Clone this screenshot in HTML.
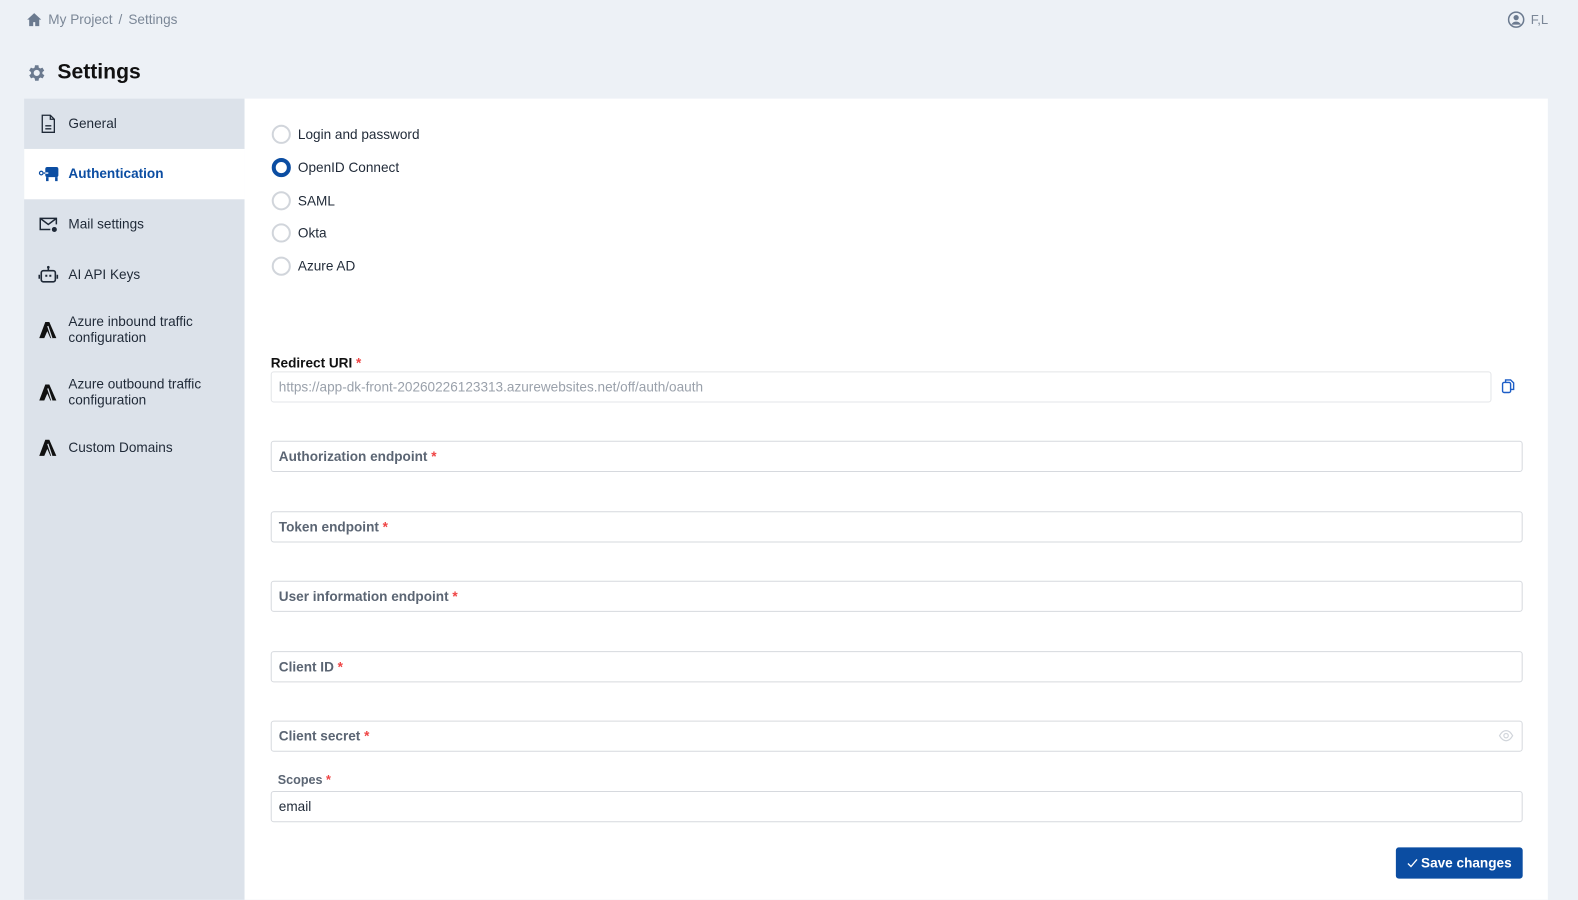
<!DOCTYPE html>
<html><head><meta charset="utf-8"><style>
*{box-sizing:border-box;margin:0;padding:0}
body{width:1578px;height:894px;background:#edf1f6;font-family:"Liberation Sans",sans-serif;overflow:hidden;color:#1f2937}
#w{position:relative;width:1578px;height:894px;transform:scale(1.0064);transform-origin:0 0}
.a{position:absolute}
.bc{left:26px;top:12px;font-size:13.5px;color:#7b8797;display:flex;align-items:center;gap:6px}
.side{left:24px;top:98px;width:219px;height:796px;background:#dce2ea}
.item{position:absolute;left:0;width:219px;display:flex;align-items:center;font-size:13.5px;color:#1f2937}
.item svg{position:absolute;left:14px}
.item span{position:absolute;left:44px;line-height:16px}
.main{left:243px;top:98px;width:1295px;height:796px;background:#fff}
.radio{position:absolute;left:270px;display:flex;align-items:center;font-size:13.5px;color:#1f2937}
.radio i{width:19px;height:19px;border:2px solid #d1d5db;border-radius:50%;display:block;margin-right:7px}
.inp{position:absolute;left:269px;width:1244px;height:31px;border:1px solid #d6d9de;border-radius:3px;font-size:13.5px;color:#5b6573;font-weight:bold;padding-left:7px;line-height:29px}
.st{color:#ef4444}
</style></head><body><div id="w">
<div class="a bc"><svg width="16" height="15" viewBox="0 0 16 15"><path d="M8 1L1 7.5h2V14h4v-4h2v4h4V7.5h2z" fill="#6b7a8f"/></svg><span>My Project</span><span>/</span><span>Settings</span></div>
<div class="a" style="left:1498px;top:11px;display:flex;align-items:center;gap:6px;font-size:13px;color:#7b8797"><svg width="17" height="17" viewBox="0 0 17 17"><circle cx="8.5" cy="8.5" r="7.5" fill="none" stroke="#6b7a8f" stroke-width="1.5"/><circle cx="8.5" cy="6.5" r="2.6" fill="#6b7a8f"/><path d="M3.8 13.5c1-2.2 2.7-3 4.7-3s3.7.8 4.7 3" fill="#6b7a8f"/></svg>F,L</div>
<div class="a" style="left:26px;top:60px;display:flex;align-items:center;gap:10px;font-size:21px;font-weight:bold;color:#111"><svg width="21" height="21" viewBox="0 0 24 24"><path fill="#6b7a8f" d="M19.4 13a7.5 7.5 0 000-2l2.1-1.6-2-3.5-2.5 1a7.6 7.6 0 00-1.7-1L15 3.2h-4l-.4 2.7a7.6 7.6 0 00-1.7 1l-2.5-1-2 3.5L6.6 11a7.5 7.5 0 000 2l-2.1 1.6 2 3.5 2.5-1a7.6 7.6 0 001.7 1l.4 2.7h4l.4-2.7a7.6 7.6 0 001.7-1l2.5 1 2-3.5zM13 15.5a3.5 3.5 0 110-7 3.5 3.5 0 010 7z" transform="translate(-1 0)"/></svg>Settings</div>
<div class="a side">
<div class="item" style="top:0;height:50px"><svg width="20" height="20" viewBox="0 0 20 20"><path d="M4 1.5h8l4 4v13H4z" fill="none" stroke="#1f2937" stroke-width="1.3"/><path d="M12 1.5v4h4M7 12h6M7 15h6" stroke="#1f2937" stroke-width="1.3" fill="none"/></svg><span>General</span></div>
<div class="item" style="top:50px;height:50px;background:#fff;color:#0b4da2;font-weight:bold"><svg width="22" height="18" viewBox="0 0 22 18"><rect x="7" y="2" width="13" height="10" rx="2" fill="#0b4da2"/><path d="M9 12v4M18 12v4" stroke="#0b4da2" stroke-width="2.5"/><circle cx="3" cy="8" r="1.8" fill="none" stroke="#0b4da2" stroke-width="1.2"/><path d="M5 8h5" stroke="#fff" stroke-width="1.4"/><path d="M5 8h2" stroke="#0b4da2" stroke-width="1.4"/></svg><span>Authentication</span></div>
<div class="item" style="top:100px;height:50px"><svg width="20" height="18" viewBox="0 0 20 18"><path d="M12 14H2V3h16v6" fill="none" stroke="#1f2937" stroke-width="1.5"/><path d="M2 3l8 6 8-6" fill="none" stroke="#1f2937" stroke-width="1.5"/><circle cx="16" cy="14" r="2.5" fill="#1f2937"/></svg><span>Mail settings</span></div>
<div class="item" style="top:150px;height:50px"><svg width="20" height="20" viewBox="0 0 20 20"><rect x="3" y="6" width="14" height="11" rx="2" fill="none" stroke="#1f2937" stroke-width="1.6"/><path d="M10 6V3" stroke="#1f2937" stroke-width="1.6"/><circle cx="10" cy="2.5" r="1.3" fill="#1f2937"/><rect x="7" y="10" width="2" height="2" fill="#1f2937"/><rect x="11" y="10" width="2" height="2" fill="#1f2937"/><path d="M1 10v4M19 10v4" stroke="#1f2937" stroke-width="1.6"/></svg><span>AI API Keys</span></div>
<div class="item" style="top:205px;height:50px"><svg width="20" height="20" viewBox="0 0 20 20"><path d="M7 2h4l7 16h-6L9 11l-3 7H1z" fill="#111"/><path d="M9.5 6l4 12" stroke="#dce2ea" stroke-width="1.3"/></svg><span>Azure inbound traffic<br>configuration</span></div>
<div class="item" style="top:267px;height:50px"><svg width="20" height="20" viewBox="0 0 20 20"><path d="M7 2h4l7 16h-6L9 11l-3 7H1z" fill="#111"/><path d="M9.5 6l4 12" stroke="#dce2ea" stroke-width="1.3"/></svg><span>Azure outbound traffic<br>configuration</span></div>
<div class="item" style="top:322px;height:50px"><svg width="20" height="20" viewBox="0 0 20 20"><path d="M7 2h4l7 16h-6L9 11l-3 7H1z" fill="#111"/><path d="M9.5 6l4 12" stroke="#dce2ea" stroke-width="1.3"/></svg><span>Custom Domains</span></div>
</div>
<div class="a main"></div>
<div class="radio" style="top:124px"><i></i>Login and password</div>
<div class="radio" style="top:157px"><i style="border:4px solid #0b4da2"></i>OpenID Connect</div>
<div class="radio" style="top:190px"><i></i>SAML</div>
<div class="radio" style="top:222px"><i></i>Okta</div>
<div class="radio" style="top:255px"><i></i>Azure AD</div>
<div class="a" style="left:269px;top:353px;font-size:13.5px;font-weight:bold;color:#111">Redirect URI <span class="st">*</span></div>
<div class="inp" style="top:369px;width:1213px;font-weight:normal;color:#9aa1ab;border-color:#e3e5e8">https://app-dk-front-20260226123313.azurewebsites.net/off/auth/oauth</div>
<svg class="a" style="left:1492px;top:376px" width="13" height="15" viewBox="0 0 13 15"><rect x="1" y="4" width="8" height="10" rx="1.5" fill="none" stroke="#1d5ec7" stroke-width="1.4"/><path d="M4 4V1.5h5l3 3V11H9" fill="none" stroke="#1d5ec7" stroke-width="1.4"/></svg>
<div class="inp" style="top:438px">Authorization endpoint <span class="st">*</span></div>
<div class="inp" style="top:508px">Token endpoint <span class="st">*</span></div>
<div class="inp" style="top:577px">User information endpoint <span class="st">*</span></div>
<div class="inp" style="top:647px">Client ID <span class="st">*</span></div>
<div class="inp" style="top:716px">Client secret <span class="st">*</span></div>
<svg class="a" style="left:1489px;top:725px" width="15" height="12" viewBox="0 0 15 12"><path d="M1 6c2-3.5 4-5 6.5-5S12 2.5 14 6c-2 3.5-4 5-6.5 5S3 9.5 1 6z" fill="none" stroke="#d1d5db" stroke-width="1.2"/><circle cx="7.5" cy="6" r="2.2" fill="none" stroke="#d1d5db" stroke-width="1.2"/></svg>
<div class="a" style="left:276px;top:768px;font-size:12.5px;font-weight:bold;color:#5b6573">Scopes <span class="st">*</span></div>
<div class="inp" style="top:786px;font-weight:normal;color:#1f2937">email</div>
<div class="a" style="left:1387px;top:842px;width:126px;height:31px;background:#0b4da2;border-radius:3px;color:#fff;font-size:13.5px;font-weight:bold;display:flex;align-items:center;justify-content:center;gap:3px"><svg width="11" height="9" viewBox="0 0 11 9"><path d="M1 5l3 3 6-7" fill="none" stroke="#fff" stroke-width="1.3"/></svg>Save changes</div>
</div></body></html>
